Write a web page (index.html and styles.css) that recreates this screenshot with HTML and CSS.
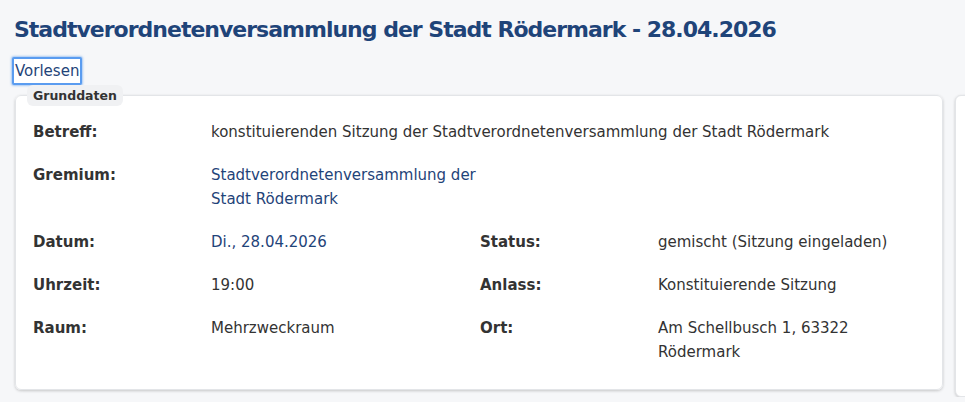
FILE: index.html
```html
<!DOCTYPE html>
<html lang="de">
<head>
<meta charset="utf-8">
<link rel="stylesheet" href="styles.css">
</head>
<body>
<main class="page">
  <h1 class="title">Stadtverordnetenversammlung der Stadt Rödermark - 28.04.2026</h1>
  <button class="read">Vorlesen</button>
  <div class="cards">
    <fieldset class="card">
      <legend class="legend">Grunddaten</legend>
      <div class="grid">
        <div class="label">Betreff:</div>
        <div class="value span3">konstituierenden Sitzung der Stadtverordnetenversammlung der Stadt Rödermark</div>

        <div class="label">Gremium:</div>
        <div class="value link narrow">Stadtverordnetenversammlung der Stadt Rödermark</div>
        <div></div><div></div>

        <div class="label">Datum:</div>
        <div class="value link">Di., 28.04.2026</div>
        <div class="label">Status:</div>
        <div class="value">gemischt (Sitzung eingeladen)</div>

        <div class="label">Uhrzeit:</div>
        <div class="value">19:00</div>
        <div class="label">Anlass:</div>
        <div class="value">Konstituierende Sitzung</div>

        <div class="label">Raum:</div>
        <div class="value">Mehrzweckraum</div>
        <div class="label">Ort:</div>
        <div class="value narrow2">Am Schellbusch 1, 63322 Rödermark</div>
      </div>
    </fieldset>
    <div class="card side"></div>
  </div>
</main>
</body>
</html>
```
FILE: styles.css
```css
html, body {
  margin: 0;
  padding: 0;
  background: #f6f7f9;
}
body {
  font-family: "DejaVu Sans", Verdana, sans-serif;
  color: #333;
  overflow: hidden;
}
.page {
  padding: 14px 0 0 14px;
}
.title {
  margin: 0;
  font-size: 22px;
  font-weight: bold;
  color: #1f4479;
  letter-spacing: -1px;
  line-height: 32px;
}
.read {
  display: block;
  margin: 11px 0 0 -2px;
  font-family: inherit;
  font-size: 15px;
  color: #1f4479;
  background: #fff;
  border: 2px solid #5a9cf0;
  box-shadow: 0 0 2px 1px rgba(90,156,240,0.5);
  padding: 3px 1px 3px 1px;
  line-height: 18px;
  border-radius: 2px;
  cursor: pointer;
}
.cards {
  display: flex;
  align-items: flex-start;
  gap: 12px;
  margin-top: 0;
}
.card {
  background: #fff;
  border: 1px solid #e3e5e8;
  border-radius: 6px;
  box-shadow: 0 1px 3px rgba(0,0,0,0.2);
  margin: 0;
  min-width: 0;
}
fieldset.card {
  width: 928px;
  box-sizing: border-box;
  flex: none;
  padding: 14px 16px 25px 17px;
  margin-left: 1px;
}
.side {
  width: 40px;
  flex: none;
  height: 300px;
  margin-top: 10px;
}
.legend {
  font-size: 12.5px;
  font-weight: bold;
  color: #333;
  background: #f0f1f3;
  border-radius: 6px;
  padding: 3px 6px 2px 6px;
  margin-left: -6px;
  line-height: 16px;
}
.grid {
  display: grid;
  grid-template-columns: 178px 269px 178px 1fr;
  row-gap: 19px;
  font-size: 15px;
  line-height: 24px;
}
.label {
  font-weight: bold;
  color: #333;
}
.value {
  color: #333;
}
.link {
  color: #1f4479;
}
.span3 {
  grid-column: span 3;
}
.narrow {
  max-width: 270px;
}
.narrow2 {
  max-width: 220px;
}
```
